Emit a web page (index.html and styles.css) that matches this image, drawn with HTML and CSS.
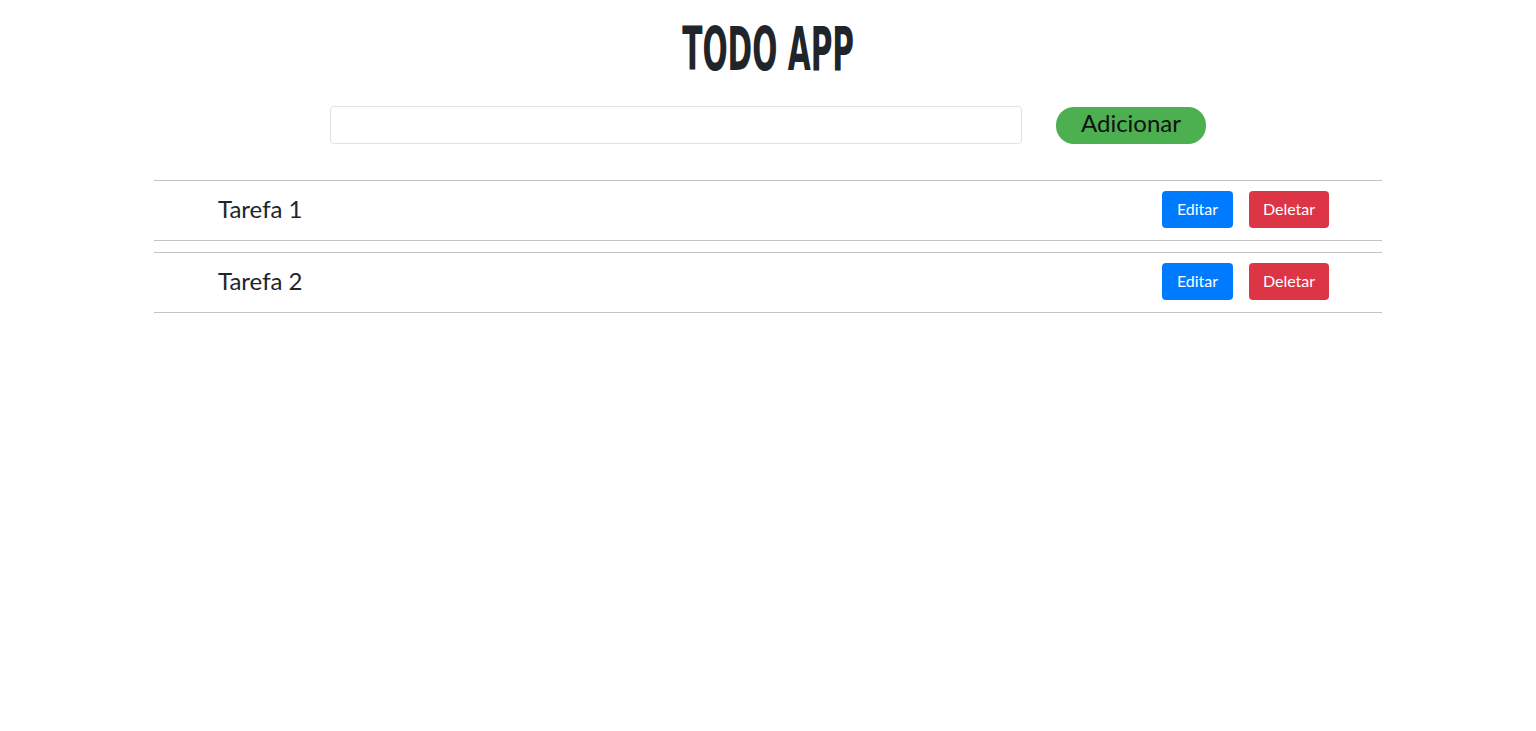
FILE: index.html
```html
<!DOCTYPE html>
<html lang="pt">
<head>
<meta charset="utf-8">
<title>Todo App</title>
<link rel="stylesheet" href="styles.css">
</head>
<body>
<div class="app">
  <h1 class="title"><span class="title-text">TODO APP</span></h1>
  <form class="add-form" onsubmit="return false">
    <input class="add-input" type="text">
    <button class="add-btn" type="button">Adicionar</button>
  </form>
  <ul class="list">
    <li class="item">
      <span class="item-text">Tarefa 1</span>
      <div class="actions">
        <button class="btn btn-edit" type="button">Editar</button>
        <button class="btn btn-delete" type="button">Deletar</button>
      </div>
    </li>
    <li class="item">
      <span class="item-text">Tarefa 2</span>
      <div class="actions">
        <button class="btn btn-edit" type="button">Editar</button>
        <button class="btn btn-delete" type="button">Deletar</button>
      </div>
    </li>
  </ul>
</div>
</body>
</html>
```
FILE: styles.css
```css
* { box-sizing: border-box; }
html, body { margin: 0; padding: 0; background: #fff; }
body {
  font-family: "Lato", "Noto Sans", sans-serif;
  color: #212529;
}
.app {
  width: 1228px;
  margin: 0 auto;
  padding-top: 14px;
}
.title {
  margin: 0;
  text-align: center;
  height: 70px;
  line-height: 70px;
}
.title-text {
  display: inline-block;
  font-family: "Liberation Sans Narrow", "DejaVu Sans Condensed", sans-serif;
  font-weight: 700;
  font-size: 61px;
  color: #212529;
  transform: scaleX(0.54);
}
.add-form {
  display: flex;
  align-items: center;
  justify-content: center;
  gap: 34px;
  margin-top: 22px;
}
.add-input {
  width: 692px;
  height: 38px;
  border: 1px solid #dee2e6;
  border-radius: 4px;
  padding: 6px 12px;
  font-size: 16px;
  outline: none;
}
.add-btn {
  width: 150px;
  height: 37px;
  border: none;
  border-radius: 18px;
  background: #4caf50;
  color: #111;
  font-family: "Lato", sans-serif;
  font-size: 24px;
  padding: 0 0 5px;
}
.list {
  list-style: none;
  margin: 36px 0 0;
  padding: 0;
}
.item {
  display: flex;
  align-items: center;
  justify-content: space-between;
  height: 61px;
  border-top: 1px solid #c4c4c4;
  border-bottom: 1px solid #c4c4c4;
  padding: 0 53px 0 64px;
  margin-bottom: 11px;
}
.item-text {
  font-size: 24px;
  color: #212529;
  padding-bottom: 4px;
}
.actions {
  display: flex;
  gap: 16px;
  padding-bottom: 2px;
}
.btn {
  height: 37px;
  border: none;
  border-radius: 4px;
  color: #fff;
  font-family: "Lato", sans-serif;
  font-size: 16px;
  padding: 0 0 3px;
}
.btn-edit { background: #007bff; width: 71px; }
.btn-delete { background: #dc3545; width: 80px; }
```
